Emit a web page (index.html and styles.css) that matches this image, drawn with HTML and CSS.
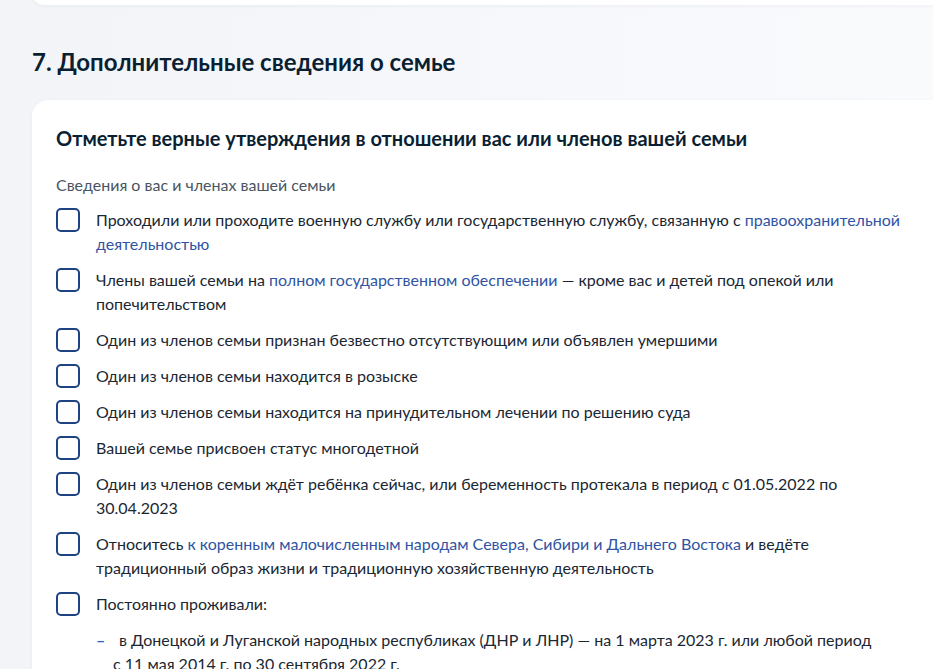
FILE: index.html
```html
<!DOCTYPE html>
<html lang="ru">
<head>
<meta charset="utf-8">
<title>Дополнительные сведения о семье</title>
<link rel="stylesheet" href="styles.css">
</head>
<body>
<div class="page">
  <div class="prev-card"></div>
  <h2 class="section-title">7. Дополнительные сведения о семье</h2>
  <section class="card">
    <h3 class="card-title">Отметьте верные утверждения в отношении вас или членов вашей семьи</h3>
    <p class="card-sub">Сведения о вас и членах вашей семьи</p>
    <ul class="checks">
      <li class="check">
        <span class="box"></span>
        <div class="label">Проходили или проходите военную службу или государственную службу, связанную с <a href="#">правоохранительной деятельностью</a></div>
      </li>
      <li class="check">
        <span class="box"></span>
        <div class="label">Члены вашей семьи на <a href="#">полном государственном обеспечении</a> — кроме вас и детей под опекой или попечительством</div>
      </li>
      <li class="check">
        <span class="box"></span>
        <div class="label">Один из членов семьи признан безвестно отсутствующим или объявлен умершими</div>
      </li>
      <li class="check">
        <span class="box"></span>
        <div class="label">Один из членов семьи находится в розыске</div>
      </li>
      <li class="check">
        <span class="box"></span>
        <div class="label">Один из членов семьи находится на принудительном лечении по решению суда</div>
      </li>
      <li class="check">
        <span class="box"></span>
        <div class="label">Вашей семье присвоен статус многодетной</div>
      </li>
      <li class="check">
        <span class="box"></span>
        <div class="label">Один из членов семьи ждёт ребёнка сейчас, или беременность протекала в период с 01.05.2022 по 30.04.2023</div>
      </li>
      <li class="check">
        <span class="box"></span>
        <div class="label">Относитесь <a href="#">к коренным малочисленным народам Севера, Сибири и Дальнего Востока</a> и ведёте традиционный образ жизни и традиционную хозяйственную деятельность</div>
      </li>
      <li class="check">
        <span class="box"></span>
        <div class="label">Постоянно проживали:</div>
      </li>
    </ul>
    <ul class="dashes">
      <li class="dash-item">в Донецкой и Луганской народных республиках (ДНР и ЛНР) — на 1 марта 2023 г. или любой период с&nbsp;11 мая 2014 г. по 30 сентября 2022 г.</li>
    </ul>
  </section>
</div>
</body>
</html>
```
FILE: styles.css
```css
html, body {
  margin: 0;
  padding: 0;
  overflow: hidden;
}
body {
  background: linear-gradient(90deg, #f2f4f8 0%, #f6f8fb 60%, #f9fafc 100%);
  font-family: Lato, "Noto Sans", "Liberation Sans", sans-serif;
  color: #0b1f33;
  height: 669px;
}
.page {
  padding-left: 32px;
}
.prev-card {
  width: 960px;
  height: 24px;
  margin-top: -19px;
  background: #ffffff;
  border-radius: 0 0 0 12px;
  box-shadow: 0 1px 4px rgba(11, 31, 51, 0.05);
}
.section-title {
  margin: 41px 0 22px;
  font-size: 24px;
  line-height: 32px;
  font-weight: 700;
  color: #0b1f33;
}
.card {
  width: 960px;
  box-sizing: border-box;
  background: #ffffff;
  border-radius: 16px 0 0 16px;
  padding: 24px;
  box-shadow: 0 1px 4px rgba(11, 31, 51, 0.05);
  height: 640px;
}
.card-title {
  margin: 0;
  font-size: 20px;
  line-height: 28px;
  font-weight: 700;
  color: #0b1f33;
}
.card-sub {
  margin: 21px 0 11px;
  font-size: 16px;
  line-height: 24px;
  color: #4a5562;
}
.checks {
  list-style: none;
  margin: 0;
  padding: 0;
  display: flex;
  flex-direction: column;
  gap: 12px;
  max-width: 850px;
}
.check {
  display: flex;
  gap: 16px;
  align-items: flex-start;
}
.box {
  flex: none;
  width: 24px;
  height: 24px;
  box-sizing: border-box;
  border: 2px solid #1f4282;
  border-radius: 5px;
}
.label {
  font-size: 16px;
  line-height: 24px;
  color: #1a2733;
}
.label a {
  color: #2f54a3;
  text-decoration: none;
}
.dashes {
  list-style: none;
  margin: 12px 0 0 40px;
  padding: 0;
  max-width: 795px;
}
.dash-item {
  font-size: 16px;
  line-height: 24px;
  color: #1a2733;
  padding-left: 17px;
  text-indent: -17px;
}
.dash-item::before {
  content: "–";
  display: inline-block;
  width: 23px;
  text-indent: 0;
  color: #3461c4;
  font-weight: 700;
}
```
